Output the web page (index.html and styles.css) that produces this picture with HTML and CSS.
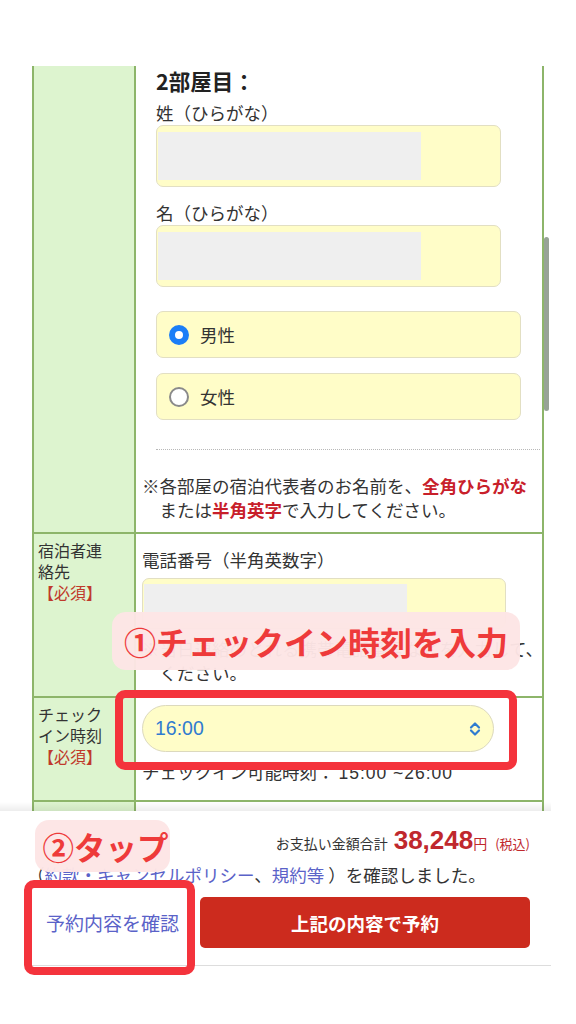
FILE: index.html
```html
<!DOCTYPE html>
<html lang="ja">
<head>
<meta charset="utf-8">
<title>予約</title>
<link rel="stylesheet" href="styles.css">
</head>
<body>
<div class="page">
  <div class="table">
    <div class="row row-names">
      <div class="th"></div>
      <div class="td">
        <div class="form-block">
          <div class="room-title">2部屋目：</div>
          <div class="field-label">姓（ひらがな）</div>
          <div class="text-input"><span class="redact"></span></div>
          <div class="field-label second">名（ひらがな）</div>
          <div class="text-input"><span class="redact"></span></div>
          <div class="radio-group">
            <div class="radio-box"><span class="radio checked"></span><span>男性</span></div>
            <div class="radio-box"><span class="radio"></span><span>女性</span></div>
          </div>
        </div>
        <div class="dotted"></div>
        <p class="note">※各部屋の宿泊代表者のお名前を、<em>全角ひらがな</em><br>または<em>半角英字</em>で入力してください。</p>
      </div>
    </div>
    <div class="row row-contact">
      <div class="th">宿泊者連絡先<br><span class="req">【必須】</span></div>
      <div class="td">
        <div class="field-label">電話番号（半角英数字）</div>
        <div class="text-input phone"><span class="redact"></span></div>
        <p class="note">※当日連絡のとれる携帯電話番号などを入力して、<br>ください。</p>
      </div>
    </div>
    <div class="row row-checkin">
      <div class="th">チェックイン時刻<br><span class="req">【必須】</span></div>
      <div class="td">
        <div class="select">
          <span class="select-value">16:00</span>
          <svg class="chevron" width="12" height="16" viewBox="0 0 12 16"><path d="M2 6.5 L6 2.5 L10 6.5 M2 9.5 L6 13.5 L10 9.5" fill="none" stroke="#2f7bd0" stroke-width="2.2" stroke-linecap="round" stroke-linejoin="round"/></svg>
        </div>
        <div class="hint">チェックイン可能時刻： <span class="hint-time">15:00 ~26:00</span></div>
      </div>
    </div>
    <div class="row tail">
      <div class="th"></div>
      <div class="td"></div>
    </div>
  </div>

  <div class="footer">
    <div class="footer-inner">
      <div class="total">
        <span class="total-label">お支払い金額合計</span>
        <span class="price">38,248</span><span class="yen">円</span><span class="tax">(税込)</span>
      </div>
      <div class="terms">（<a>約款・キャンセルポリシー</a>、<a>規約等</a> ）を確認しました。</div>
      <div class="actions">
        <div class="confirm-link">予約内容を確認</div>
        <div class="reserve-btn">上記の内容で予約</div>
      </div>
    </div>
  </div>

  <div class="scrollbar"></div>
  <div class="bubble bubble-1">①チェックイン時刻を入力</div>
  <div class="red-box box-1"></div>
  <div class="bubble bubble-2">②タップ</div>
  <div class="red-box box-2"></div>
</div>
</body>
</html>
```

FILE: styles.css
```css
* { box-sizing: border-box; }

body {
  margin: 0;
  background: #fff;
  color: #333;
  font-family: "Noto Sans CJK JP", "Noto Sans", sans-serif;
}

.page {
  position: relative;
  width: 576px;
  height: 1024px;
  overflow: hidden;
  padding-top: 66px;
}

.table {
  margin-left: 32px;
  width: 512px;
  border-left: 2px solid #8db56a;
  border-right: 2px solid #8db56a;
}

.row {
  display: grid;
  grid-template-columns: 102px 1fr;
  border-bottom: 2px solid #8db56a;
}

.th {
  background: #ddf4cf;
  border-right: 2px solid #8db56a;
  padding: 6px 22px 0 4px;
  font-size: 16px;
  line-height: 21px;
  color: #333;
}

.req { color: #c0392b; }

.td { padding: 0 0 10px 6px; }

.row-contact .td { padding: 14px 0 11px 6px; }
.row-checkin .td { padding: 7px 0 15px 6px; }

.row.tail { height: 9px; border-bottom: none; }
.row.tail .td { padding: 0; }

.form-block { margin-left: 14px; }

.room-title {
  font-size: 21.5px;
  font-weight: bold;
  line-height: 30px;
  color: #222;
}

.field-label {
  margin-top: 5px;
  font-size: 17.5px;
  line-height: 24px;
}
.field-label.second { margin-top: 14px; }
.row-contact .field-label { margin-top: 0; }

.text-input {
  width: 345px;
  height: 62px;
  background: #fffdc8;
  border: 1.5px solid #e2dfc3;
  border-radius: 7px;
  padding: 6px 0 6px 1px;
}
.text-input .redact {
  display: block;
  width: 263px;
  height: 100%;
  background: #efefef;
}
.text-input.phone {
  width: 364px;
  height: 51px;
  margin-top: 6px;
  padding: 5px 0 5px 1px;
}

.radio-group {
  margin-top: 24px;
  display: flex;
  flex-direction: column;
  gap: 15px;
}
.radio-box {
  width: 365px;
  height: 47px;
  background: #fffdc8;
  border: 1.5px solid #e2dfc3;
  border-radius: 7px;
  display: flex;
  align-items: center;
  gap: 11px;
  padding-left: 12px;
  font-size: 17.5px;
}
.radio {
  width: 20px;
  height: 20px;
  border-radius: 50%;
  border: 2px solid #8a8a8a;
  background: #fff;
}
.radio.checked {
  border: 6px solid #1b7ef7;
}

.dotted {
  margin-top: 29px;
  margin-left: 14px;
  margin-right: 2px;
  border-top: 1px dotted #b8b8b8;
}

.note {
  margin: 24px 0 0 0;
  font-size: 17.5px;
  line-height: 24px;
  padding-left: 1em;
  text-indent: -1em;
  white-space: nowrap;
}
.row-contact .note { margin-top: 8px; }
.note em {
  font-style: normal;
  font-weight: bold;
  color: #c8202a;
}

.select {
  width: 352px;
  height: 47px;
  border-radius: 24px;
  background: #fffdc8;
  border: 1.5px solid #dcd9bd;
  display: flex;
  align-items: center;
  justify-content: space-between;
  padding: 0 12px 0 12px;
}
.select-value {
  font-family: "Liberation Sans", sans-serif;
  font-size: 19.5px;
  color: #2f7bd0;
}

.hint {
  margin-top: 8px;
  font-size: 17.5px;
  line-height: 24px;
  white-space: nowrap;
}
.hint-time {
  font-family: "Liberation Sans", sans-serif;
  letter-spacing: 1px;
}

.footer {
  position: relative;
  width: 551px;
  background: #fff;
}
.footer::before {
  content: "";
  position: absolute;
  left: 0;
  right: 0;
  top: -9px;
  height: 9px;
  background: linear-gradient(to bottom, rgba(0,0,0,0), rgba(0,0,0,0.07));
}
.footer-inner {
  margin-left: 25px;
  padding: 14px 21px 17px 0;
  border-bottom: 1px solid #ddd;
}

.total {
  display: flex;
  justify-content: flex-end;
  align-items: baseline;
  line-height: 30px;
  color: #333;
}
.total-label { font-size: 14px; margin-right: 6px; }
.price {
  font-family: "Liberation Sans", sans-serif;
  font-weight: bold;
  font-size: 26px;
  color: #c0282d;
}
.yen { font-size: 14px; color: #c0282d; margin-right: 8px; }
.tax { font-size: 13px; color: #c0282d; }

.terms {
  margin-top: 4px;
  margin-left: 2px;
  font-size: 17.5px;
  line-height: 24px;
  white-space: nowrap;
}
.terms a { color: #5a62c8; }

.actions {
  margin-top: 10px;
  display: flex;
  height: 51px;
}
.confirm-link {
  width: 175px;
  display: flex;
  align-items: center;
  justify-content: center;
  font-size: 19px;
  color: #5a62c8;
}
.reserve-btn {
  flex: 1;
  background: #cc2b1e;
  border-radius: 5px;
  color: #fff;
  font-weight: bold;
  font-size: 18.5px;
  display: flex;
  align-items: center;
  justify-content: center;
}

.scrollbar {
  position: absolute;
  left: 544px;
  top: 237px;
  width: 5px;
  height: 174px;
  border-radius: 3px;
  background: #97a396;
}

.bubble {
  position: absolute;
  background: rgba(253, 229, 229, 0.97);
  border-radius: 14px;
  color: #ee3a3a;
  font-weight: bold;
  display: flex;
  align-items: center;
  justify-content: center;
  white-space: nowrap;
}
.bubble-1 {
  left: 112px;
  top: 612px;
  width: 408px;
  height: 58px;
  font-size: 32px;
}
.bubble-2 {
  left: 35px;
  top: 820px;
  width: 135px;
  height: 52px;
  font-size: 31.5px;
  padding-left: 6px;
}

.red-box {
  position: absolute;
  border: 8px solid #f4333c;
  border-radius: 10px;
}
.box-1 { left: 115px; top: 690px; width: 402px; height: 80px; }
.box-2 { left: 24px; top: 880px; width: 171px; height: 95px; }
```
